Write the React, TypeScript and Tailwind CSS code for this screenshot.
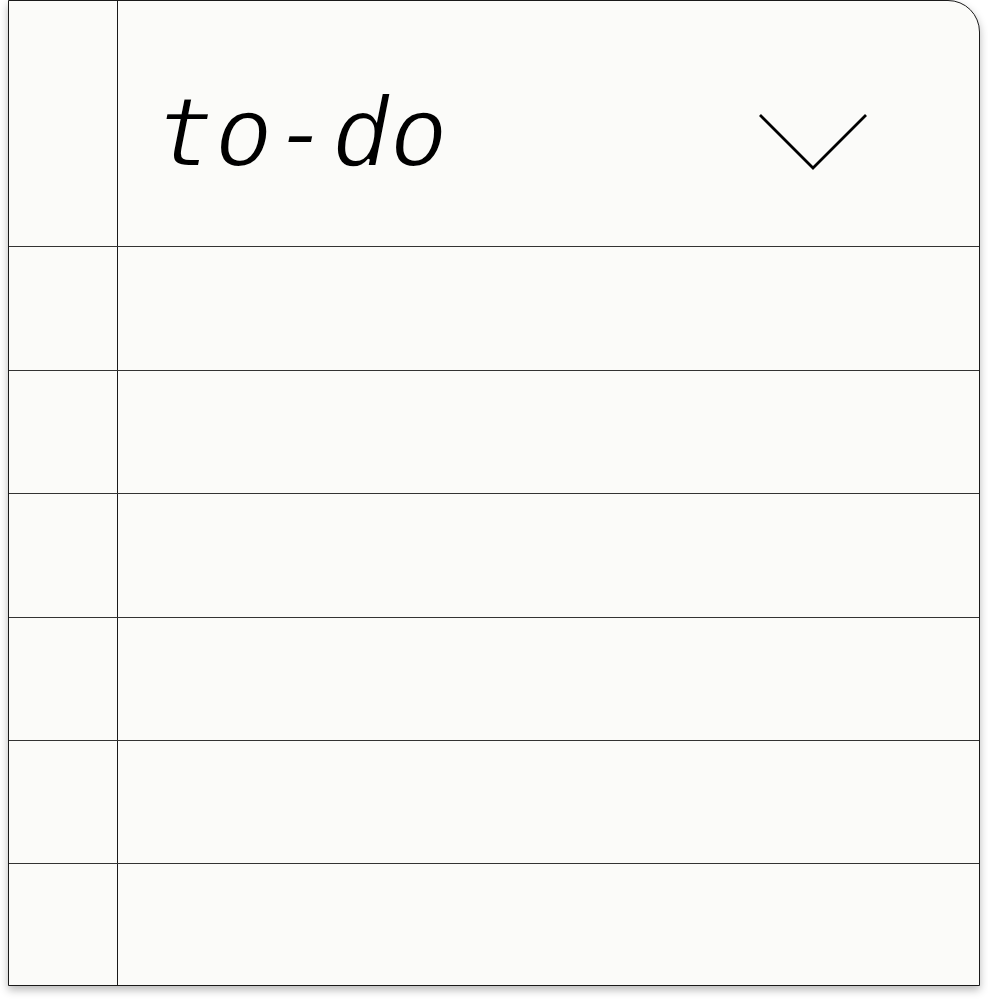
import React from "react";

// line positions taken from the sheet: each row's height includes its top rule
const rowHeights = [124, 123, 124, 123, 123, 123];

function Chevron() {
  return (
    <svg width="112" height="62" viewBox="0 0 112 62" className="block" aria-hidden>
      <polyline points="3,3 56,56 109,3" fill="none" stroke="#000" strokeWidth="2.8" />
    </svg>
  );
}

export default function App() {
  return (
    <div className="min-h-screen bg-white">
      <div className="ml-[8px] w-[972px] overflow-hidden rounded-tr-[32px] border border-[#1a1a1a] bg-[#fbfbf9] shadow-[0_4px_8px_rgba(0,0,0,0.28)]">
        <div className="flex h-[245px]">
          <div className="w-[109px] shrink-0 border-r border-[#1a1a1a]" />
          <div className="flex flex-1 items-center justify-between pl-[38px] pr-[110px]">
            <h1
              className="pt-[18px] text-[97px] italic leading-none text-black [-webkit-text-stroke:2px_#fbfbf9] [paint-order:fill]"
              style={{ fontFamily: '"DejaVu Sans Mono", "Liberation Mono", monospace' }}
            >
              to-do
            </h1>
            <div className="pt-[38px]">
              <Chevron />
            </div>
          </div>
        </div>
        {rowHeights.map((h, i) => (
          <div
            key={i}
            className="flex border-t border-[#333]"
            style={{ height: i === rowHeights.length - 1 ? h - 1 : h }}
          >
            <div className="w-[109px] shrink-0 border-r border-[#1a1a1a]" />
            <div className="flex-1" />
          </div>
        ))}
      </div>
    </div>
  );
}
